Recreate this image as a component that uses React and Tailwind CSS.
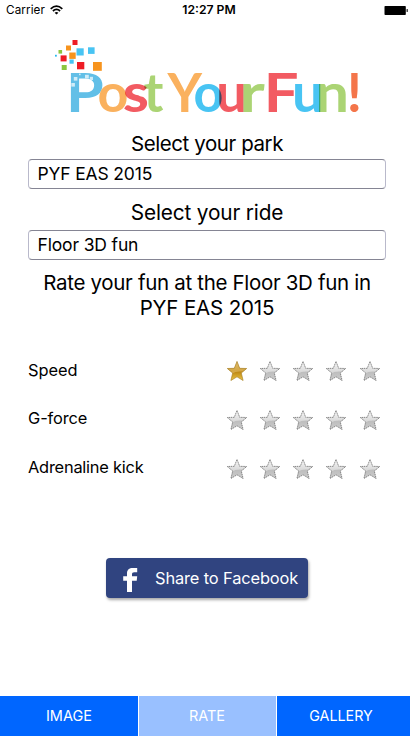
const BLUE = '#48c4f3';
const RED = '#f25b62';
const GREEN = '#abd474';
const ORANGE = '#fab15e';

// char, left and right ink edges on the page, ink bounds per 100 units, colour, blended with its neighbour
const LETTERS = [
  ['P', 71, 102.7, 8, 60, '#62bfe7', false],
  ['o', 99, 127, 3, 55, ORANGE, false],
  ['s', 124, 147.3, 2, 41, RED, true],
  ['t', 144, 163.3, 1, 37, GREEN, true],
  ['Y', 167, 202.7, -1, 66, ORANGE, false],
  ['o', 195, 222, 3, 55, BLUE, false],
  ['u', 219, 243.8, 5, 51, RED, true],
  ['r', 243.4, 264.6, 6, 37, GREEN, true],
  ['F', 268.7, 297, 8, 54, RED, false],
  ['u', 294.7, 320.5, 5, 51, BLUE, false],
  ['n', 319, 345.7, 6, 51, GREEN, true],
  ['!', 350, 358.7, 6, 22, '#f4754a', false],
];

// x, y, size, colour
const CONFETTI = [
  [72.5, 40, 5, '#ee1c25'],
  [66, 45.5, 5, '#f7941e'],
  [58.5, 50, 3.6, '#8cc63f'],
  [55, 54.8, 1.8, '#29b8ee'],
  [76.5, 48.3, 7.2, '#48c4f3'],
  [88, 47.3, 6.6, '#48c4f3'],
  [69.3, 52.5, 6.4, '#f7941e'],
  [60.6, 55.4, 6, '#ee1c25'],
  [69.5, 59.5, 4.2, '#48c4f3'],
  [61.7, 65, 5, '#8cc63f'],
  [77, 62, 7.3, '#ee1c25'],
  [93, 62, 8.8, '#f7941e'],
];

const SPARKS = [
  [73.8, 77, 3.6],
  [85, 74.8, 3.8],
  [89.8, 76.8, 3.2],
  [71.3, 83, 3.6],
  [79, 73.6, 1.6],
];

function Logo() {
  return (
    <svg className="block h-[110px] w-[414px] shrink-0 isolate" viewBox="0 20 414 110">
      {CONFETTI.map(([x, y, s, c]) => (
        <rect key={`${x}-${y}`} x={x} y={y} width={s} height={s} fill={c} />
      ))}
      {LETTERS.map(([ch, x0, x1, l, r, c, blend], i) => {
        const sx = (x1 - x0) / (r - l);
        return (
          <text
            key={i}
            transform={`translate(${x0 - l * sx} 112.3) scale(${sx} 0.535)`}
            fill={c}
            fontSize="100"
            className={blend ? "font-['Lato',sans-serif] font-bold mix-blend-multiply" : "font-['Lato',sans-serif] font-bold"}
          >
            {ch}
          </text>
        );
      })}
      {SPARKS.map(([x, y, s]) => (
        <rect key={`${x}-${y}`} x={x} y={y} width={s} height={s} fill="#cfecf8" />
      ))}
    </svg>
  );
}

function Star({ on }) {
  const d = 'M10 0.4 L12.7 7.3 L19.7 7.5 L14.3 12 L16.1 19.5 L10 15.8 L3.9 19.5 L5.7 12 L0.3 7.5 L7.3 7.3 Z';
  return (
    <svg className="block size-5" viewBox="0 0 20 20">
      <path d={d} fill={on ? 'url(#gold)' : 'url(#silver)'} />
      <path
        d="M0.3 7.5 L7.3 7.3 L10 0.4 L12.7 7.3 L19.7 7.5 L15.8 10.6 Q9 9.8 5 12.5 L5.7 12 Z"
        fill={on ? '#e4c06a' : '#f4f4f4'}
        opacity={on ? 0.6 : 0.5}
      />
      <path
        d={d}
        fill="none"
        stroke={on ? '#a9812a' : '#707070'}
        strokeWidth="0.9"
        strokeDasharray={on ? 'none' : '1.5 0.7'}
        opacity={on ? 0.75 : 0.9}
      />
    </svg>
  );
}

function RatingRow({ label, value, className }) {
  return (
    <div className="flex h-[49px] items-center justify-between pl-7 pr-[34.5px]">
      <span className={className}>{label}</span>
      <div className="flex gap-[13.25px]">
        {[1, 2, 3, 4, 5].map((n) => (
          <Star key={n} on={n <= value} />
        ))}
      </div>
    </div>
  );
}

function Field({ children }) {
  return (
    <div className="mx-7 flex h-[30px] items-center rounded-[4px] border border-x-[#b9b9cb] border-y-[#858594] pl-[8.5px] text-[17.5px] leading-none tracking-[-0.15px]">
      {children}
    </div>
  );
}

function StatusBar() {
  return (
    <div className="grid h-5 grid-cols-[1fr_auto_1fr] items-center pl-1.5 pr-1.5 leading-none">
      <div className="flex items-center gap-[5px] text-[11.7px]">
        <span className="pt-px tracking-[0.1px]">Carrier</span>
        <svg className="h-[10px] w-[13px]" viewBox="0 0 13 10" fill="none" stroke="#000" strokeWidth="1.7">
          <path d="M0.7 3.8 Q6.5 -1.7 12.3 3.8" />
          <path d="M2.9 6 Q6.5 2.7 10.1 6" />
          <path d="M6.5 9.6 L4.6 7.7 Q6.5 6.2 8.4 7.7 Z" fill="#000" stroke="none" />
        </svg>
      </div>
      <span className="pl-1 pt-px text-[12.2px] font-semibold">12:27 PM</span>
      <svg className="h-[9px] w-[24px] justify-self-end" viewBox="0 0 24 9">
        <rect x="0.5" y="0" width="21.3" height="9" rx="0.8" />
        <rect x="22.6" y="3" width="1.1" height="3" rx="0.5" />
      </svg>
    </div>
  );
}

export default function App() {
  return (
    <div className="relative flex h-[736px] w-[414px] flex-col overflow-hidden bg-white font-['Inter','Liberation_Sans',sans-serif] text-black">
      <svg className="absolute size-0">
        <defs>
          <linearGradient id="gold" x1="0" y1="0" x2="0" y2="1">
            <stop offset="0" stopColor="#d9b96b" />
            <stop offset="0.5" stopColor="#b8810f" />
            <stop offset="1" stopColor="#ecc544" />
          </linearGradient>
          <linearGradient id="silver" x1="0" y1="0" x2="0" y2="1">
            <stop offset="0" stopColor="#ffffff" />
            <stop offset="0.55" stopColor="#bdbdbd" />
            <stop offset="1" stopColor="#cccccc" />
          </linearGradient>
        </defs>
      </svg>
      <StatusBar />
      <Logo />
      <h2 className="pt-px text-center text-[20.5px] leading-[25px] tracking-[-0.42px]">Select your park</h2>
      <div className="pt-[3px]">
        <Field>PYF EAS 2015</Field>
      </div>
      <h2 className="pt-[11px] text-center text-[20.8px] leading-[25px] tracking-[-0.15px]">Select your ride</h2>
      <div className="pt-[5px]">
        <Field>Floor 3D fun</Field>
      </div>
      <div className="pt-[10px] text-center text-[20.5px] leading-[25px]">
        <p className="tracking-[-0.32px]">Rate your fun at the Floor 3D fun in</p>
        <p className="tracking-[-0.15px]">PYF EAS 2015</p>
      </div>
      <div className="pt-[26px]">
        <RatingRow label="Speed" value={1} className="text-[16.4px] tracking-[-0.05px]" />
        <RatingRow label="G-force" value={0} className="pb-0.5 text-[16.4px] tracking-[-0.1px]" />
        <RatingRow label="Adrenaline kick" value={0} className="pb-[3px] text-[16.4px] tracking-[-0.22px]" />
      </div>
      <div className="flex justify-center pt-[65px]">
        <button className="flex h-10 w-[202px] items-center rounded-[4px] bg-[#304480] pl-[17px] text-[16.4px] leading-none tracking-[-0.12px] text-white shadow-[1px_2px_3px_rgba(0,0,0,0.35)]">
          <svg className="mt-1 h-6 w-[15px] shrink-0" viewBox="0 0 15 24" fill="#fff">
            <path d="M4 24 V12.7 H0.2 V8.2 H4 V5.5 C4 1.8 6.2 0 9.8 0 H14.2 V4.2 H11.3 C9.6 4.2 9 4.9 9 6.3 V8.2 H14.2 L13.7 12.7 H9 V24 Z" />
          </svg>
          <span className="ml-[17px] whitespace-nowrap">Share to Facebook</span>
        </button>
      </div>
      <nav className="mt-auto flex h-10 w-[410px] gap-px text-[14.5px] leading-none text-white">
        <div className="flex w-[138px] items-center justify-center bg-[#0066ff]">IMAGE</div>
        <div className="flex w-[137px] items-center justify-center bg-[#99c0ff] pr-px">RATE</div>
        <div className="flex w-[133px] items-center justify-center bg-[#0066ff] pr-[5px] text-[14.3px]">GALLERY</div>
      </nav>
    </div>
  );
}
